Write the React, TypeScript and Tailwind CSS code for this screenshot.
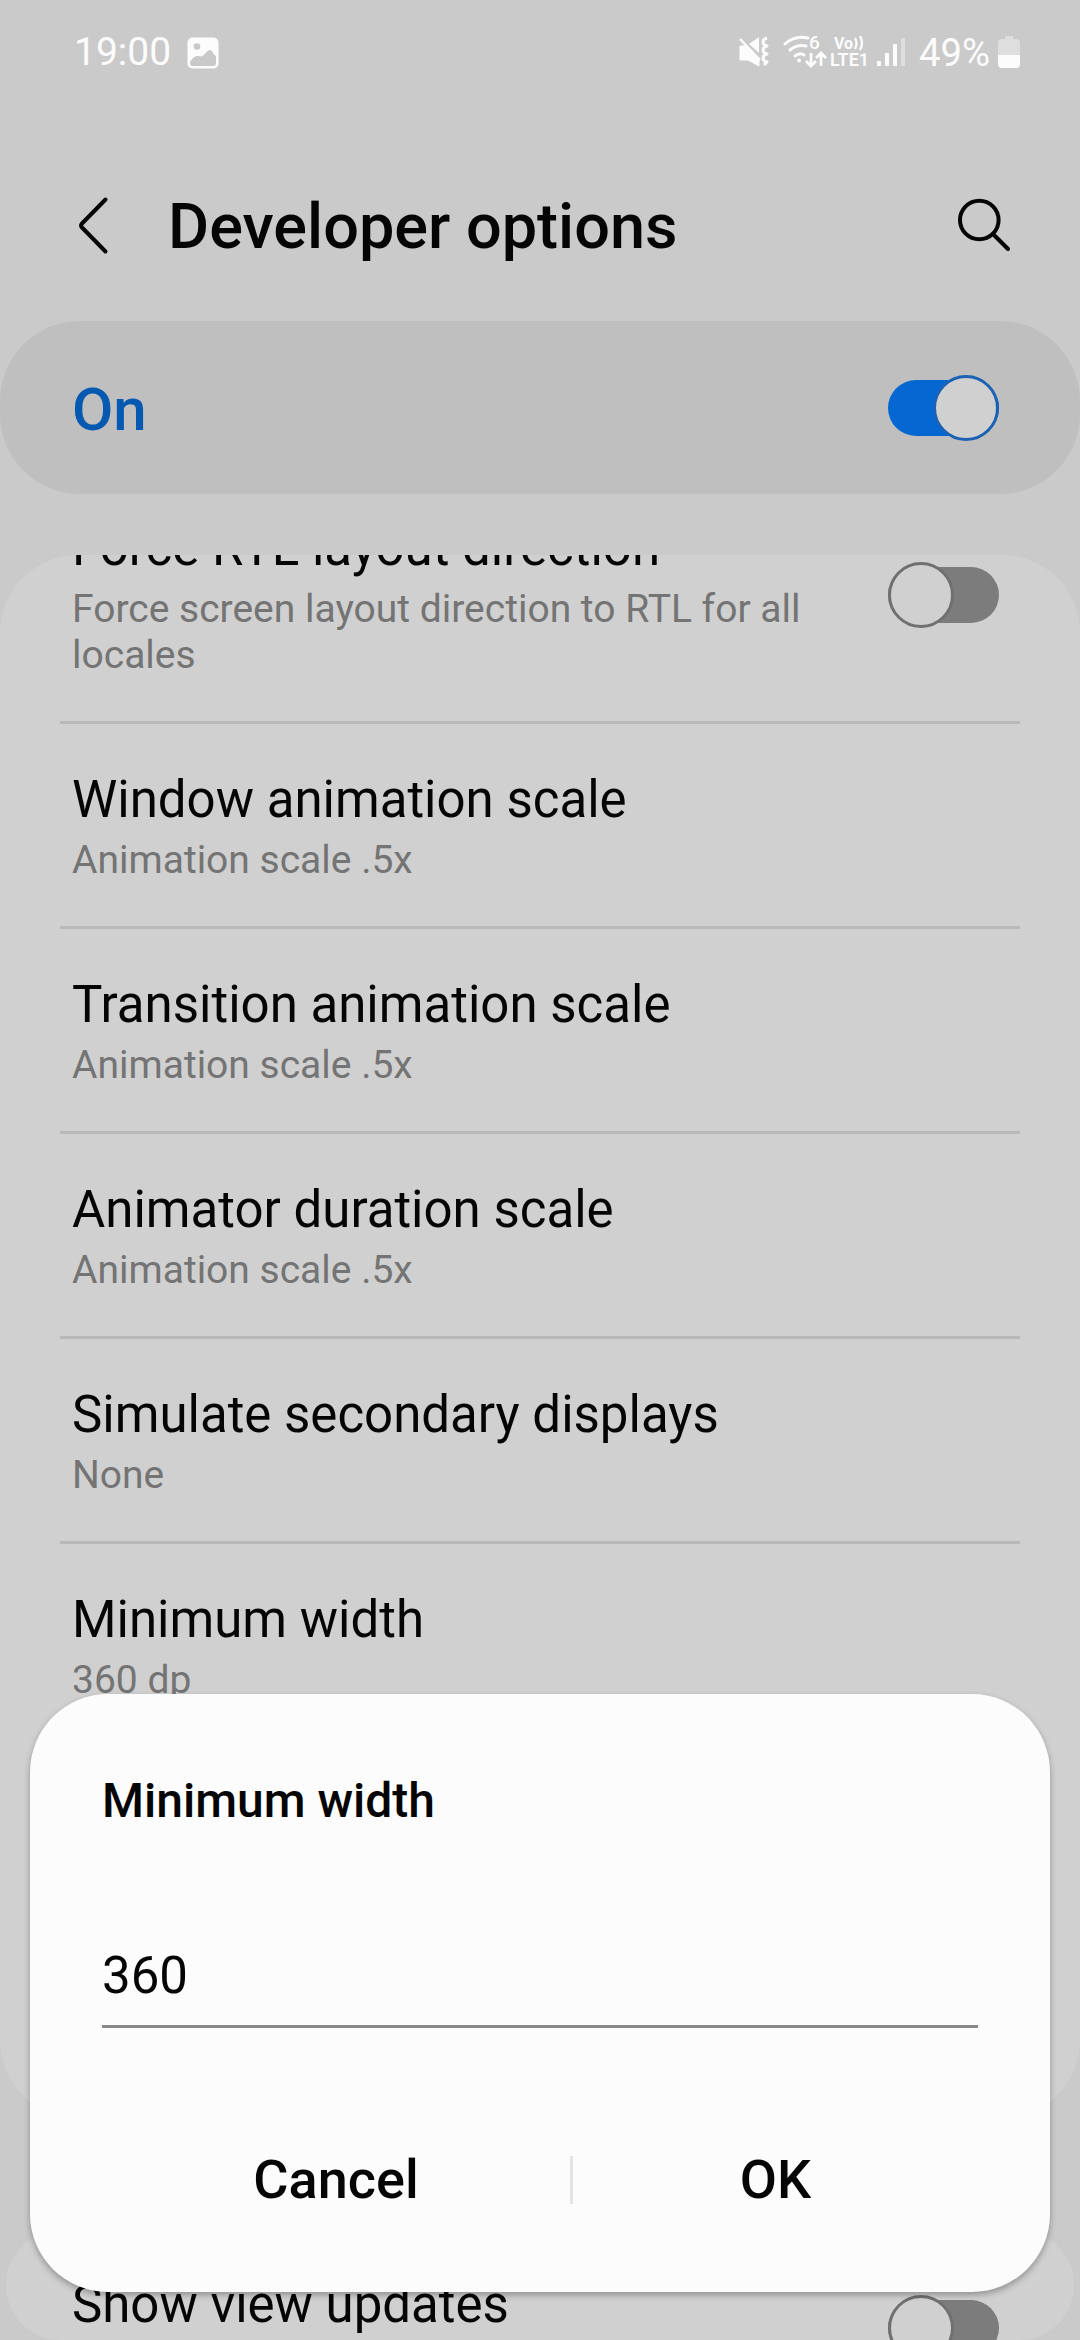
import clsx from "clsx";

const settings = [
  { title: "Window animation scale", summary: "Animation scale .5x" },
  { title: "Transition animation scale", summary: "Animation scale .5x" },
  { title: "Animator duration scale", summary: "Animation scale .5x" },
  { title: "Simulate secondary displays", summary: "None" },
  { title: "Minimum width", summary: "360 dp" },
];

const Switch = ({ checked = false }: { checked?: boolean }) => (
  <div
    role="switch"
    aria-checked={checked}
    className="flex h-[66px] w-[111px] shrink-0 items-center"
  >
    <div
      className={clsx(
        "flex h-14 w-full items-center rounded-full",
        checked ? "justify-end bg-[#0568d2]" : "justify-start bg-[#7c7c7c]"
      )}
    >
      <div
        className={clsx(
          "size-[66px] shrink-0 rounded-full border-3 bg-[#d0d0d0]",
          checked ? "border-[#1b62b4]" : "border-[#707070]"
        )}
      />
    </div>
  </div>
);

const StatusBar = () => (
  <div className="flex h-[105px] shrink-0 items-center pr-[57px] pl-[74px] text-[39px] leading-none text-[#fcfcfc]">
    <span>19:00</span>
    <svg className="ml-4 h-8 w-8" viewBox="0 0 32 32">
      <rect x="0.5" y="0.5" width="31" height="31" rx="5" fill="#fcfcfc" />
      <circle cx="10" cy="9.5" r="3.3" fill="#c9c9c9" />
      <path
        d="M3 25c2-4 5-6 7-6 3 0 3 1 5 0 3-1 5-6 8-6 2 0 3 4 6 6v7q0 3-2 3H5q-2 0-2-4z"
        fill="#c9c9c9"
      />
    </svg>

    <svg
      className="ml-auto h-[60px] w-[288px]"
      viewBox="0 -12 288 60"
      fill="none"
    >
      {/* muted, vibrating */}
      <path d="M5 11h5l14 14v6L13 25H5z" fill="#fcfcfc" stroke="#fcfcfc" />
      <path d="M14 9l10-7v16z" fill="#fcfcfc" />
      <path d="M5 4l20 21" stroke="#fcfcfc" strokeWidth="2.5" />
      <path
        d="M32 3q-4 1-4 4t4 4q-4 1-4 4t4 4q-4 1-4 4t4 4l-3 3"
        stroke="#fcfcfc"
        strokeWidth="3"
        strokeLinejoin="round"
      />
      {/* wifi */}
      <g stroke="#fcfcfc" strokeWidth="3" strokeLinecap="round">
        <path d="M50 9q10-9 23-6" />
        <path d="M55 15q7-6 16-4" />
        <path d="M60 21q5-4 9-1" />
      </g>
      <circle cx="64" cy="25.5" r="2" fill="#fcfcfc" />
      <text x="74" y="14" fontSize="19" fontWeight="500" fill="#fcfcfc">
        6
      </text>
      <path
        d="M76 18v13m-5-5l5 5 5-5M86 31V18m-5 5l5-5 5 5"
        stroke="#fcfcfc"
        strokeWidth="2.8"
      />
      {/* carrier */}
      <text x="99" y="14" fontSize="16" fontWeight="700" fill="#fcfcfc">
        Vo
      </text>
      <path
        d="M120 3q3 5 0 11M125 1q4 7 0 14"
        stroke="#fcfcfc"
        strokeWidth="2.3"
      />
      <text
        x="95"
        y="31"
        fontSize="17.5"
        fontWeight="600"
        fill="#fcfcfc"
        textLength="39"
        lengthAdjust="spacingAndGlyphs"
      >
        LTE1
      </text>
      {/* signal */}
      <g strokeWidth="4" stroke="#fcfcfc">
        <path d="M144 26v5M152 18v13M160 9v22" />
        <path d="M168 3v28" stroke="#dedede" />
      </g>
      <text
        x="184"
        y="31"
        fontSize="39"
        fill="#fcfcfc"
        textLength="71"
        lengthAdjust="spacingAndGlyphs"
      >
        49%
      </text>
      <path d="M270 1h8v3h3q4 0 4 4v12h-22V8q0-4 4-4h3z" fill="#dedede" />
      <path d="M263 20h22v9q0 4-4 4h-14q-4 0-4-4z" fill="#fcfcfc" />
    </svg>
  </div>
);

const Header = () => (
  <header className="flex h-[216px] shrink-0 items-center pt-[29px] pr-[68px] pl-[76px]">
    <svg
      className="mb-1.5 h-[60px] w-9"
      viewBox="0 0 36 60"
      fill="none"
      stroke="#050505"
      strokeWidth="4"
      strokeLinecap="round"
    >
      <path d="M29.5 4.500L6 28.500q-2 2 0 4l23.500 24" />
    </svg>
    <h1 className="ml-14 text-[63px] font-medium text-[#050505]">
      Developer options
    </h1>
    <svg
      className="mb-1.5 ml-auto h-[60px] w-[60px]"
      viewBox="0 0 60 60"
      fill="none"
      stroke="#050505"
      strokeWidth="4"
      strokeLinecap="round"
    >
      <circle cx="27.3" cy="25" r="19.3" />
      <path d="M41 39l15 15" />
    </svg>
  </header>
);

const Dialog = () => (
  <div className="absolute top-[1694px] left-[30px] flex h-[598px] w-[1020px] flex-col rounded-[78px] bg-[#fcfcfc] px-[72px] pt-[77px] text-[#050505] shadow-[0_3px_6px_rgba(0,0,0,0.3)]">
    <h2 className="text-[48px] leading-[60px] font-medium">Minimum width</h2>
    <div className="mt-[115px] h-[82px] border-b-3 border-[#888] text-[51px] leading-[60px]">
      360
    </div>
    <div className="mt-[119px] flex h-[66px] items-center text-[54px] leading-[66px] font-medium">
      <button className="w-[468px]">Cancel</button>
      <div className="h-12 w-[3px] shrink-0 bg-[#e4e4e4]" />
      <button className="w-[405px]">OK</button>
    </div>
  </div>
);

export default function App() {
  return (
    <div className="relative flex h-[2340px] w-[1080px] flex-col overflow-hidden bg-[#cacaca] font-[Roboto,sans-serif]">
      <StatusBar />
      <Header />

      <div className="flex h-[173px] shrink-0 items-center justify-between rounded-[80px] bg-[#bfbfbf] pr-[81px] pl-[72px]">
        <span className="mt-1 text-[60px] font-medium text-[#0559b1]">On</span>
        <Switch checked />
      </div>

      {/* the list is scrolled, so its first row is cut at the top */}
      <div className="mt-[61px] h-[1563px] shrink-0 overflow-hidden rounded-[78px] bg-[#d0d0d0] px-[60px]">
        <div className="-mt-[37px] flex h-[203px] justify-between pr-[21px] pl-3">
          <div>
            <div className="text-[51px] leading-[60px] text-[#050505]">
              Force RTL layout direction
            </div>
            <div className="mt-2 w-[760px] text-[39px] leading-[46px] text-[#747474]">
              Force screen layout direction to RTL for all locales
            </div>
          </div>
          <div className="pt-11">
            <Switch />
          </div>
        </div>

        {settings.map(({ title, summary }) => (
          <div
            key={title}
            className="h-[205px] border-t-3 border-[#b9b9b9] px-3 pt-[46px]"
          >
            <div className="text-[51px] leading-[60px] text-[#050505]">
              {title}
            </div>
            <div className="mt-[7px] text-[39px] leading-[46px] text-[#747474]">
              {summary}
            </div>
          </div>
        ))}
      </div>

      <div className="mx-1.5 mt-[112px] flex h-[110px] shrink-0 justify-between rounded-[55px] bg-[#d0d0d0] pr-[75px] pl-[66px]">
        <div className="mt-[45px] text-[51px] leading-[60px] text-[#050505]">
          Show view updates
        </div>
        <div className="mt-[65px]">
          <Switch />
        </div>
      </div>

      <Dialog />
    </div>
  );
}
